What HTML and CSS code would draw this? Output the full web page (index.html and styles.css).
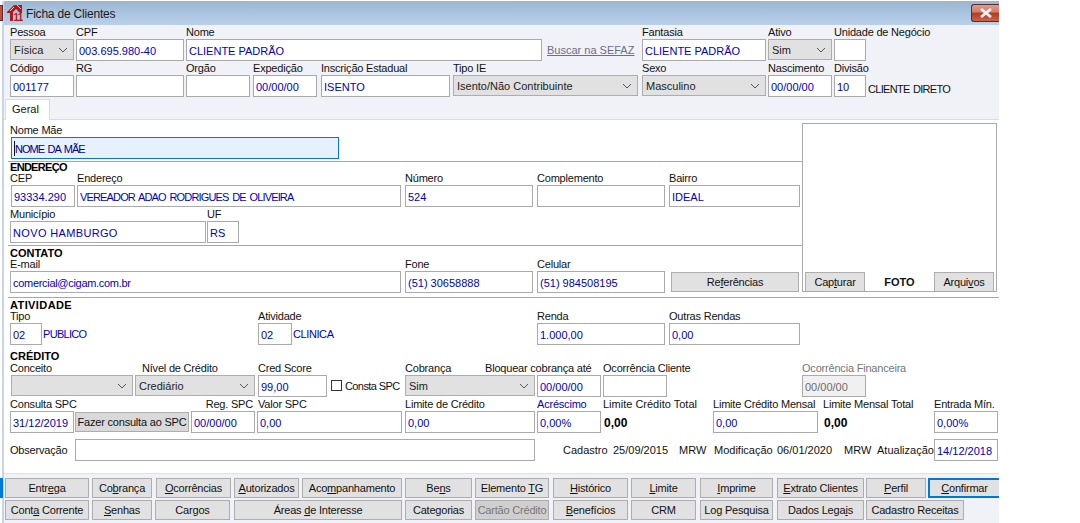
FILE: index.html
```html
<!DOCTYPE html>
<html lang="pt-BR">
<head>
<meta charset="utf-8">
<title>Ficha de Clientes</title>
<link rel="stylesheet" href="styles.css">
</head>
<body>
<div class="bg-red"></div>
<div class="bg-blue"></div>
<div class="window">
  <header class="titlebar">
    <svg class="logo" width="16" height="22" viewBox="0 0 16 22">
      <path d="M0 10 L7 3 H15 V11 H13 L9 7 L6 10 V19 H3 V11 H0Z" fill="#b5161c"/>
      <path d="M3 9 L7 5 M10 3 L14 7" stroke="#f3c9c6" stroke-width="1" fill="none"/>
      <text x="6.5" y="19" class="logo-num">11</text>
    </svg>
    <span class="title">Ficha de Clientes</span>
    <div class="close"><svg width="14" height="10" viewBox="0 0 14 10"><path d="M2 1 L12 9 M12 1 L2 9" stroke="#eef0f2" stroke-width="2.8" fill="none"/></svg></div>
  </header>

  <section class="top">
    <div class="row">
      <div class="f w64 m6"><label>Pessoa</label><div class="sel">Física<svg class="chev" width="10" height="6" viewBox="0 0 10 6"><path d="M1 1 L5 5 L9 1" fill="none" stroke="#555"/></svg></div></div>
      <div class="f w108 m2"><label>CPF</label><div class="in">003.695.980-40</div></div>
      <div class="f w356 m2"><label>Nome</label><div class="in">CLIENTE PADRÃO</div></div>
      <div class="f w95 m5"><label>&nbsp;</label><a class="link">Buscar na SEFAZ</a></div>
      <div class="f w124"><label>Fantasia</label><div class="in">CLIENTE PADRÃO</div></div>
      <div class="f w64 m2"><label>Ativo</label><div class="sel">Sim<svg class="chev" width="10" height="6" viewBox="0 0 10 6"><path d="M1 1 L5 5 L9 1" fill="none" stroke="#555"/></svg></div></div>
      <div class="f w32 m2"><label>Unidade de Negócio</label><div class="in"></div></div>
    </div>
    <div class="row">
      <div class="f w64 m6"><label>Código</label><div class="in">001177</div></div>
      <div class="f w108 m2"><label>RG</label><div class="in"></div></div>
      <div class="f w64 m2"><label>Orgão</label><div class="in"></div></div>
      <div class="f w64 m3"><label>Expedição</label><div class="in">00/00/00</div></div>
      <div class="f w129 m4"><label>Inscrição Estadual</label><div class="in">ISENTO</div></div>
      <div class="f w185 m3"><label>Tipo IE</label><div class="sel">Isento/Não Contribuinte<svg class="chev" width="10" height="6" viewBox="0 0 10 6"><path d="M1 1 L5 5 L9 1" fill="none" stroke="#555"/></svg></div></div>
      <div class="f w124 m4"><label>Sexo</label><div class="sel">Masculino<svg class="chev" width="10" height="6" viewBox="0 0 10 6"><path d="M1 1 L5 5 L9 1" fill="none" stroke="#555"/></svg></div></div>
      <div class="f w64 m2"><label>Nascimento</label><div class="in">00/00/00</div></div>
      <div class="f w32 m2"><label>Divisão</label><div class="in">10</div></div>
      <span class="note">CLIENTE DIRETO</span>
    </div>
    <div class="tabs"><div class="tab">Geral</div></div>
  </section>

  <main class="body">
    <div class="upper">
      <div class="left">
        <div class="row mae">
          <div class="f w329 m6"><label>Nome Mãe</label><div class="in focus"><i class="caret"></i>NOME DA MÃE</div></div>
        </div>
        <div class="rule"></div>
        <h3 class="head h-end">ENDEREÇO</h3>
        <div class="row">
          <div class="f w65 m6 nudge"><label>CEP</label><div class="in">93334.290</div></div>
          <div class="f w324 m2"><label>Endereço</label><div class="in tight-9">VEREADOR ADAO RODRIGUES DE OLIVEIRA</div></div>
          <div class="f w128 m4"><label>Número</label><div class="in">524</div></div>
          <div class="f w128 m4"><label>Complemento</label><div class="in"></div></div>
          <div class="f w131 m4"><label>Bairro</label><div class="in">IDEAL</div></div>
        </div>
        <div class="row">
          <div class="f w196 m6"><label>Município</label><div class="in wide-3">NOVO HAMBURGO</div></div>
          <div class="f w32 m1"><label>UF</label><div class="in">RS</div></div>
        </div>
        <div class="rule after"></div>
        <h3 class="head contato">CONTATO</h3>
        <div class="row">
          <div class="f w391 m6"><label>E-mail</label><div class="in tight-3">comercial@cigam.com.br</div></div>
          <div class="f w128 m4"><label>Fone</label><div class="in">(51) 30658888</div></div>
          <div class="f w128 m4"><label>Celular</label><div class="in">(51) 984508195</div></div>
          <div class="btn ref">Re<u>f</u>erências</div>
        </div>
      </div>
      <aside class="photo">
        <div class="btn pbtn">Cap<u>t</u>urar</div>
        <strong class="foto">FOTO</strong>
        <div class="btn pbtn">Arqui<u>v</u>os</div>
      </aside>
    </div>
    <div class="rule full"></div>

    <h3 class="head atividade">ATIVIDADE</h3>
    <div class="row">
      <div class="f w248 m6"><label>Tipo</label><div class="pair"><div class="in w32">02</div><span class="desc tight-7">PUBLICO</span></div></div>
      <div class="f w279"><label>Atividade</label><div class="pair"><div class="in w34">02</div><span class="desc tight-4">CLINICA</span></div></div>
      <div class="f w128"><label>Renda</label><div class="in">1.000,00</div></div>
      <div class="f w131 m4"><label>Outras Rendas</label><div class="in">0,00</div></div>
    </div>

    <h3 class="head credito">CRÉDITO</h3>
    <div class="row">
      <div class="f w123 m6 nudge"><label>Conceito</label><div class="sel"><svg class="chev" width="10" height="6" viewBox="0 0 10 6"><path d="M1 1 L5 5 L9 1" fill="none" stroke="#555"/></svg></div></div>
      <div class="f w120 m2"><label class="in7">Nível de Crédito</label><div class="sel">Crediário<svg class="chev" width="10" height="6" viewBox="0 0 10 6"><path d="M1 1 L5 5 L9 1" fill="none" stroke="#555"/></svg></div></div>
      <div class="f w69 m3"><label>Cred Score</label><div class="in">99,00</div></div>
      <div class="f w74 m4"><label>&nbsp;</label><div class="check"><i class="box"></i>Consta SPC</div></div>
      <div class="f w130"><label>Cobrança</label><div class="sel">Sim<svg class="chev" width="10" height="6" viewBox="0 0 10 6"><path d="M1 1 L5 5 L9 1" fill="none" stroke="#555"/></svg></div></div>
      <div class="f w64 m2"><label class="bloq">Bloquear cobrança até</label><div class="in">00/00/00</div></div>
      <div class="f w64 m2"><label>Ocorrência Cliente</label><div class="in"></div></div>
      <div class="f w64 m135"><label class="off">Ocorrência Financeira</label><div class="in dis">00/00/00</div></div>
    </div>
    <div class="row">
      <div class="f w64 m6"><label>Consulta SPC</label><div class="in">31/12/2019</div></div>
      <div class="btn spc">Fazer consulta ao SPC</div>
      <div class="f w64 m2"><label class="right">Reg. SPC</label><div class="in">00/00/00</div></div>
      <div class="f w145 m2"><label class="in1">Valor SPC</label><div class="in">0,00</div></div>
      <div class="f w130 m3"><label>Limite de Crédito</label><div class="in">0,00</div></div>
      <div class="f w64 m2"><label class="blue">Acréscimo</label><div class="in">0,00%</div></div>
      <div class="f w110 m2"><label class="full-label">Limite Crédito Total</label><b class="val">0,00</b></div>
      <div class="f w105"><label>Limite Crédito Mensal</label><div class="in">0,00</div></div>
      <div class="f w111 m5"><label>Limite Mensal Total</label><b class="val">0,00</b></div>
      <div class="f w64"><label>Entrada Mín.</label><div class="in">0,00%</div></div>
    </div>
    <div class="row obs">
      <span class="t-obs">Observação</span>
      <div class="in w460"></div>
      <span class="t-cad">Cadastro</span><span class="t-date">25/09/2015</span><span class="t-mrw">MRW</span>
      <span class="t-mod">Modificação</span><span class="t-date2">06/01/2020</span><span class="t-mrw2">MRW</span>
      <span class="t-atu">Atualização</span>
      <div class="in w64">14/12/2018</div>
    </div>
  </main>

  <footer class="actions">
    <div class="brow">
      <div class="btn a84">Entr<u>e</u>ga</div><div class="btn a60">Co<u>b</u>rança</div><div class="btn a75 l4"><u>O</u>corrências</div><div class="btn a65"><u>A</u>utorizados</div><div class="btn a100">Aco<u>m</u>panhamento</div><div class="btn a67">Be<u>n</u>s</div><div class="btn a74">Elemento <u>T</u>G</div><div class="btn a75 l4"><u>H</u>istórico</div><div class="btn a65"><u>L</u>imite</div><div class="btn a73 l4"><u>I</u>mprime</div><div class="btn a87 l4"><u>E</u>xtrato Clientes</div><div class="btn a60 l2"><u>P</u>erfil</div><div class="btn confirm"><u>C</u>onfirmar</div>
    </div>
    <div class="brow">
      <div class="btn a84">Cont<u>a</u> Corrente</div><div class="btn a60"><u>S</u>enhas</div><div class="btn a75">Cargos</div><div class="btn a168 l4">Áreas <u>d</u>e Interesse</div><div class="btn a67">Categorias</div><div class="btn a74 dim">Cartão Crédito</div><div class="btn a75 l4"><u>B</u>enefícios</div><div class="btn a65">CRM</div><div class="btn a73 l4">Log Pesquisa</div><div class="btn a87 l4">Dados Lega<u>i</u>s</div><div class="btn a98 l2">Cadastro Receitas</div>
    </div>
  </footer>
</div>
</body>
</html>
```

FILE: styles.css
```css
* { box-sizing: border-box; }
html, body { margin: 0; height: 523px; overflow: hidden; background: #fff; }
body { font: 11px/14px "Liberation Sans", Arial, sans-serif; color: #111; position: relative; }

.bg-red { position: absolute; left: 0; top: 5px; width: 3px; height: 16px; background: #c0503c; border: 1px solid #5a2a30; border-left: 0; }
.bg-blue { position: absolute; left: 0; top: 478px; width: 3px; height: 20px; background: #0078d7; }

.window { margin: 1px 0 0 2px; width: 997px; height: 522px; border-left: 2px solid #c6d6e8; background: #f0f2f8; display: flex; flex-direction: column; }

.titlebar { height: 24px; flex: none; display: flex; align-items: center; background: linear-gradient(#9db6d0, #b9d1ec); padding-left: 3px; position: relative; }
.logo { flex: none; }
.logo-num { font: bold 10px "Liberation Sans", sans-serif; fill: #b5161c; letter-spacing: -0.8px; }
.title { margin: 2px 0 0 3px; font-size: 12px; letter-spacing: -0.2px; color: #1a1a1a; }
.close { position: absolute; right: 0; top: 3px; width: 28px; height: 18px; border: 1px solid #5b2a33; border-right: 0; border-radius: 3px 0 0 3px; background: linear-gradient(#dc9c8c 0, #cf7d68 45%, #b5391d 50%, #c8654a 100%); display: flex; align-items: center; justify-content: center; }

.top { height: 95px; flex: none; border-bottom: 1px solid #dcdcdc; position: relative; }
.row { display: flex; align-items: flex-start; }
.f { flex: none; min-width: 0; }
label { display: block; height: 14px; line-height: 14px; white-space: nowrap; letter-spacing: -0.2px; }
.in, .sel { height: 22px; border: 1px solid #aaa; background: #fff; color: #0000c4; padding: 2px 2px 0; line-height: 19px; white-space: nowrap; overflow: hidden; }
.sel { height: 21px; background: #e1e1e1; border-color: #adadad; color: #222; padding: 0 3px; display: flex; align-items: center; justify-content: space-between; line-height: 14px; }
.chev { flex: none; margin: 0 2px 0 auto; }
.link { display: block; height: 22px; line-height: 22px; color: #6d6d8c; text-decoration: underline; }
.note { margin: 21px 0 0 2px; white-space: nowrap; letter-spacing: -0.7px; word-spacing: 1px; }

.tabs { position: absolute; left: 0; bottom: -1px; display: flex; }
.tab { width: 45px; height: 21px; margin-left: 1px; background: #fff; border: 1px solid #dcdcdc; border-bottom: 0; padding-left: 6px; line-height: 18px; }

.body { flex: none; height: 353px; background: #fff; }
.upper { display: flex; align-items: flex-start; }
.left { width: 798px; flex: none; padding-top: 3px; }
.mae { height: 38px; }
.rule { height: 1px; margin-left: 4px; background: #a6a6a6; }
.rule.after { margin-top: 2px; }
.rule.full { margin-top: 4px; }
.head { margin: 0; height: 9px; font: bold 11px/11px "Liberation Sans", sans-serif; color: #000; padding-left: 6px; }
.h-end { letter-spacing: -0.7px; }
.contato { margin-top: 2px; }
.atividade { margin-top: 2px; letter-spacing: 0.4px; }
.credito { margin-top: 6px; height: 10px; }
.tight-9 { letter-spacing: -0.85px; word-spacing: 1.5px; }
.tight-7 { letter-spacing: -0.7px; }
.tight-4 { letter-spacing: -0.4px; }
.tight-3 { letter-spacing: -0.3px; }
.wide-3 { letter-spacing: 0.35px; }
.nudge .in, .nudge .sel, .mae .in { margin-left: 1px; }
.focus { border-color: #0078d7; background: #e5f1fb; color: #00008c; padding-left: 3px; position: relative; letter-spacing: -1px; word-spacing: 1.5px; }
.caret { position: absolute; left: 2px; top: 3px; width: 1px; height: 15px; background: #111; }
.btn { height: 20px; background: #e1e1e1; border: 1px solid #adadad; color: #111; text-align: center; line-height: 18px; white-space: nowrap; flex: none; letter-spacing: -0.2px; }
.ref { width: 128px; margin: 15px 0 0 6px; }
.photo { width: 195px; height: 169px; margin-top: 3px; border: 1px solid #aaa; display: flex; align-items: flex-end; justify-content: space-between; padding: 0 2px 0 2px; flex: none; }
.pbtn { width: 60px; border-bottom: 0; height: 19px; }
.foto { align-self: flex-end; line-height: 18px; }
.pair { display: flex; align-items: center; }
.desc { margin-left: 1px; color: #0000c4; white-space: nowrap; margin-top: -1px; }
.check { display: flex; align-items: center; height: 21px; white-space: nowrap; letter-spacing: -0.6px; }
.box { width: 11px; height: 11px; border: 1px solid #333; background: #fff; margin-right: 3px; }
.spc { width: 114px; margin: 15px 0 0 1px; background: #d9d9d9; }
.right { text-align: right; padding-right: 2px; }
.in1 { padding-left: 1px; }
.in7 { padding-left: 7px; }
.bloq { margin-left: -52px; }
.off { color: #767676; }
.blue { color: #0000c4; }
.full-label { letter-spacing: 0; }
.dis { background: #f0f0f0; color: #6d6d6d; }
.val { display: block; margin: 5px 0 0 1px; font-size: 12px; line-height: 14px; color: #000; }
.obs { margin-top: 6px; align-items: center; }
.obs span { flex: none; white-space: nowrap; }
.t-obs { width: 65px; margin-left: 6px; letter-spacing: -0.2px; }
.t-cad { width: 50px; margin-left: 28px; }
.t-date { width: 66px; }
.t-mrw { width: 35px; }
.t-mod { width: 63px; }
.t-date2 { width: 67px; }
.t-mrw2 { width: 33px; }
.t-atu { width: 57px; }

.w32 { width: 32px; } .w34 { width: 34px; } .w64 { width: 64px; } .w65 { width: 65px; } .w69 { width: 69px; }
.w74 { width: 74px; } .w95 { width: 95px; } .w105 { width: 105px; } .w108 { width: 108px; } .w110 { width: 110px; } .w111 { width: 111px; }
.w120 { width: 120px; } .w123 { width: 123px; } .w124 { width: 124px; } .w128 { width: 128px; } .w129 { width: 129px; }
.w130 { width: 130px; } .w131 { width: 131px; } .w145 { width: 145px; } .w185 { width: 185px; } .w196 { width: 196px; }
.w248 { width: 248px; } .w279 { width: 279px; } .w324 { width: 324px; } .w329 { width: 329px; } .w356 { width: 356px; }
.w391 { width: 391px; } .w460 { width: 460px; }
.m1 { margin-left: 1px; } .m2 { margin-left: 2px; } .m3 { margin-left: 3px; } .m4 { margin-left: 4px; } .m5 { margin-left: 5px; } .m6 { margin-left: 6px; }
.m135 { margin-left: 135px; }

.actions { flex: 1; background: #f0f2f8; border-top: 1px solid #e0e0e0; padding: 4px 0 0 1px; overflow: hidden; }
.brow { display: flex; gap: 3px; margin-bottom: 2px; }
.brow .l2 { margin-left: -1px; }
.brow .l4 { margin-left: 1px; }
.a60 { width: 60px; } .a65 { width: 65px; } .a67 { width: 67px; } .a73 { width: 73px; } .a74 { width: 74px; } .a75 { width: 75px; }
.a84 { width: 84px; } .a87 { width: 87px; } .a98 { width: 98px; } .a100 { width: 100px; } .a168 { width: 168px; }
.dim { background: #cfcfcf; color: #777; }
.confirm { width: 71px; border: 2px solid #0078d7; border-right: 0; margin-left: -1px; line-height: 16px; }
```
